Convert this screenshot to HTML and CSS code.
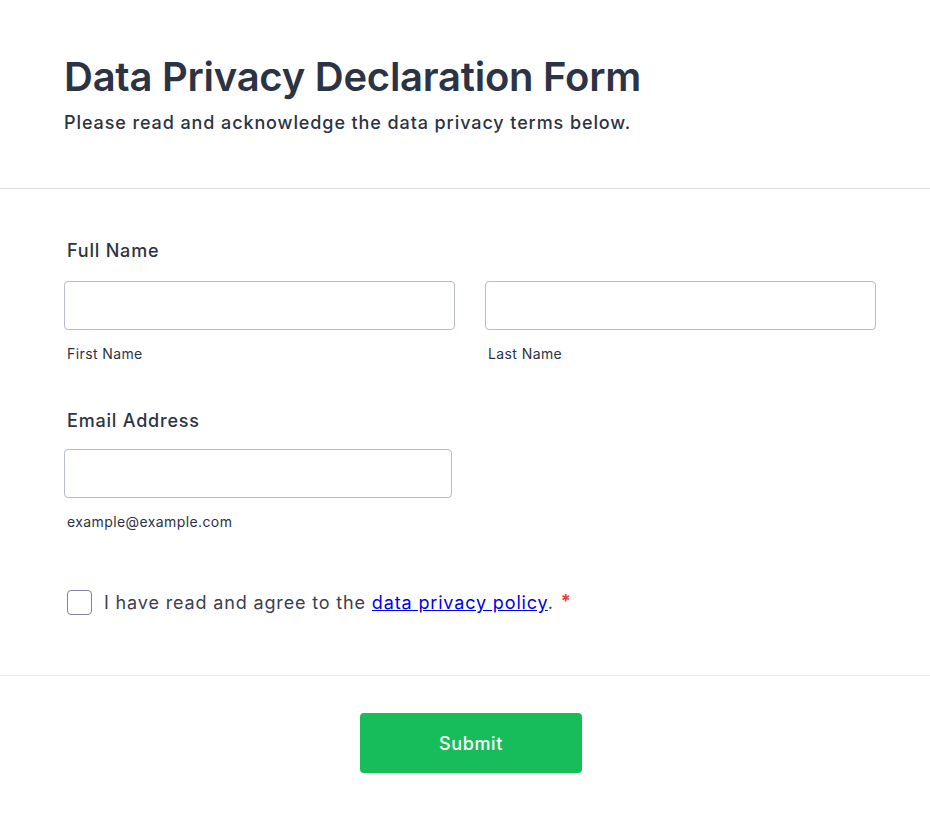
FILE: index.html
```html
<!DOCTYPE html>
<html lang="en">
<head>
    <meta charset="UTF-8">
    <meta name="viewport" content="width=device-width, initial-scale=1.0">
    <title>Data Privacy Declaration Form</title>
    <link rel="stylesheet" href="styles.css">
</head>
<body>
    <header class="form-header">
        <h1>Data Privacy Declaration Form</h1>
        <p class="form-subtitle">Please read and acknowledge the data privacy terms below.</p>
    </header>

    <form class="form-body" action="/submit" method="POST">
        <!-- Full name -->
        <div class="field">
            <label class="field-label" for="first-name">Full Name</label>
            <div class="name-row">
                <div class="name-col">
                    <input type="text" id="first-name" name="first-name">
                    <label class="sub-label" for="first-name">First Name</label>
                </div>
                <div class="name-col">
                    <input type="text" id="last-name" name="last-name">
                    <label class="sub-label" for="last-name">Last Name</label>
                </div>
            </div>
        </div>

        <!-- Email -->
        <div class="field">
            <label class="field-label email-label" for="email">Email Address</label>
            <input type="email" id="email" name="email" class="email-input">
            <label class="sub-label" for="email">example@example.com</label>
        </div>

        <!-- Consent -->
        <div class="consent">
            <input type="checkbox" id="agree" name="agree" required>
            <label for="agree">I have read and agree to the <a href="#">data privacy policy</a>.</label>
            <span class="required">*</span>
        </div>

        <div class="form-footer">
            <button type="submit" class="submit-btn">Submit</button>
        </div>
    </form>
</body>
</html>
```

FILE: styles.css
```css
body {
    font-family: Inter, "Noto Sans", sans-serif;
    background-color: #fff;
    color: #2c3345;
    margin: 0;
}

.form-header {
    padding: 53px 64px 53px;
    border-bottom: 1px solid #dcdfe9;
}

.form-header h1 {
    margin: 0;
    font-size: 40px;
    line-height: 48px;
    font-weight: 600;
    letter-spacing: -0.25px;
    color: #2c3345;
}

.form-subtitle {
    margin: 10px 0 0;
    font-size: 18px;
    line-height: 24px;
    font-weight: 500;
    letter-spacing: 0.9px;
}

.form-body {
    padding: 50px 54px 0 64px;
}

.field {
    margin-bottom: 45px;
}

.field-label {
    display: block;
    margin: 0 0 18px 3px;
    font-size: 18px;
    line-height: 24px;
    font-weight: 500;
    letter-spacing: 0.8px;
}

.email-label {
    margin-bottom: 16px;
}

.name-row {
    display: grid;
    grid-template-columns: 391px 391px;
    gap: 30px;
}

input[type="text"],
input[type="email"] {
    display: block;
    width: 100%;
    height: 49px;
    border: 1px solid #b8bdc9;
    border-radius: 4px;
    box-sizing: border-box;
    margin: 0;
    font: inherit;
}

.email-input {
    max-width: 388px;
}

.sub-label {
    display: block;
    margin: 14px 0 0 3px;
    font-size: 14px;
    line-height: 20px;
    letter-spacing: 0.4px;
    color: #2c3345;
}

.consent {
    display: flex;
    align-items: center;
    margin: 58px 0 0 3px;
    font-size: 18px;
    letter-spacing: 0.85px;
    color: #3a4052;
}

.consent input[type="checkbox"] {
    appearance: none;
    width: 25px;
    height: 25px;
    margin: 0 12px 0 0;
    border: 1.5px solid #80859a;
    border-radius: 4px;
    background: #fff;
}

.consent a {
    color: #0000ee;
}

.required {
    color: #f23a3c;
    margin-left: 7px;
    align-self: flex-start;
    font-weight: 700;
    letter-spacing: 0;
}

.form-footer {
    margin: 60px -54px 0 -64px;
    padding: 37px 54px 50px 64px;
    border-top: 1px solid #e6e9f2;
    text-align: center;
}

.submit-btn {
    width: 222px;
    height: 60px;
    margin-left: 2px;
    background-color: #18bd5b;
    color: #fff;
    border: none;
    border-radius: 4px;
    font-family: inherit;
    font-size: 18px;
    font-weight: 500;
    letter-spacing: 0.6px;
    cursor: pointer;
}
```
